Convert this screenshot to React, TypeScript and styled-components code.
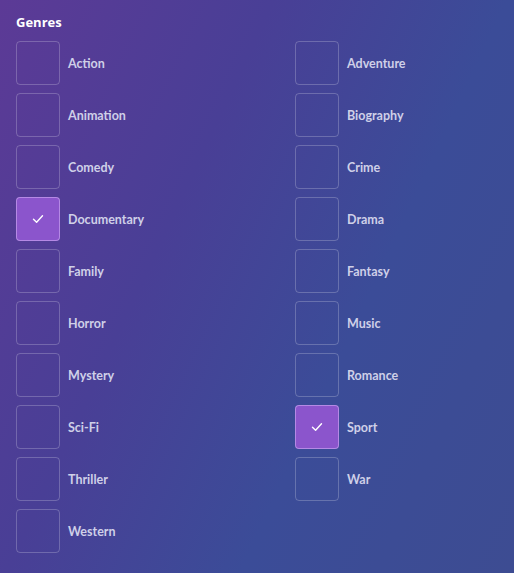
import styled, { createGlobalStyle } from 'styled-components'

const genres = [
  'Action', 'Adventure', 'Animation', 'Biography', 'Comedy', 'Crime',
  'Documentary', 'Drama', 'Family', 'Fantasy', 'Horror', 'Music',
  'Mystery', 'Romance', 'Sci-Fi', 'Sport', 'Thriller', 'War', 'Western',
]
const checked = ['Documentary', 'Sport']

const GlobalStyle = createGlobalStyle`
  html, body { margin: 0; padding: 0; }
  body {
    font-family: Lato, "Open Sans", sans-serif;
    background: #3d4a95;
  }
`

const Page = styled.div`
  width: 514px;
  height: 573px;
  box-sizing: border-box;
  padding: 14px 16px 0;
  background: linear-gradient(115deg, #5c3a96 0%, #493f96 35%, #3b4c98 65%, #3d4c92 100%);
`

const Title = styled.h2`
  margin: 0 0 11px;
  font-family: "Open Sans", sans-serif;
  font-size: 13px;
  line-height: 16px;
  font-weight: 700;
  color: #ffffff;
`

const Grid = styled.div`
  display: grid;
  grid-template-columns: 279px 1fr;
  row-gap: 8px;
`

const Item = styled.label`
  display: flex;
  align-items: center;
  gap: 8px;
  cursor: pointer;
`

const Box = styled.span<{ $on: boolean }>`
  width: 44px;
  height: 44px;
  box-sizing: border-box;
  border-radius: 4px;
  border: 1px solid ${p => (p.$on ? 'rgba(200, 160, 240, 0.7)' : 'rgba(255, 255, 255, 0.22)')};
  background: ${p => (p.$on ? '#8b55cc' : 'transparent')};
  display: flex;
  align-items: center;
  justify-content: center;
`

const Label = styled.span`
  padding-top: 1px;
  font-size: 12.5px;
  font-weight: 700;
  color: #cfd0e8;
`

export default function App() {
  return (
    <>
      <GlobalStyle />
      <Page>
        <Title>Genres</Title>
        <Grid>
          {genres.map(g => {
            const on = checked.includes(g)
            return (
              <Item key={g}>
                <Box $on={on}>
                  {on && (
                    <svg width="12" height="10" viewBox="0 0 12 10" fill="none">
                      <path d="M1.5 5.2 L4.6 8.2 L10.5 1.8" stroke="#fff" strokeWidth="1.4" strokeLinecap="round" strokeLinejoin="round" />
                    </svg>
                  )}
                </Box>
                <Label>{g}</Label>
              </Item>
            )
          })}
        </Grid>
      </Page>
    </>
  )
}
